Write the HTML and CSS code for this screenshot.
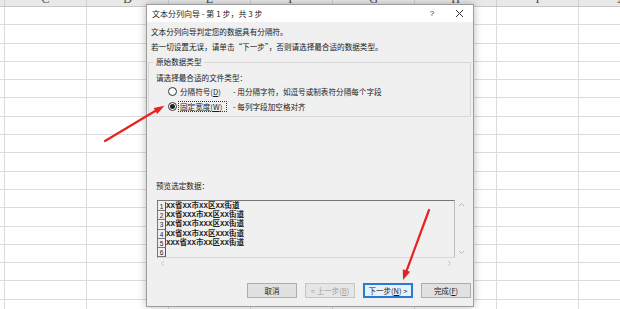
FILE: index.html
```html
<!DOCTYPE html>
<html lang="zh">
<head>
<meta charset="utf-8">
<link rel="stylesheet" href="styles.css">
</head>
<body>
<div class="sheet">
  <div class="colhead">
    <div class="hc stub"></div>
    <div class="hc"><span>C</span></div>
    <div class="hc"><span>D</span></div>
    <div class="hc"><span>E</span></div>
    <div class="hc"><span>F</span></div>
    <div class="hc"><span>G</span></div>
    <div class="hc"><span>H</span></div>
    <div class="hc"><span>I</span></div>
    <div class="hc"><span>J</span></div>
  </div>
  <div class="grid"></div>
</div>

<div class="dialog">
  <div class="titlebar">
    <span class="title">文本分列向导 - 第 1 步，共 3 步</span>
    <span class="help">?</span>
    <svg class="close" width="9" height="9" viewBox="0 0 9 9"><path d="M1 1L8 8M8 1L1 8" stroke="#333" stroke-width="1"/></svg>
  </div>
  <div class="body">
    <p class="line">文本分列向导判定您的数据具有分隔符。</p>
    <p class="line">若一切设置无误，请单击“下一步”，否则请选择最合适的数据类型。</p>
    <fieldset class="group">
      <legend>原始数据类型</legend>
      <p class="ask">请选择最合适的文件类型：</p>
      <div class="opt">
        <span class="radio"></span>
        <span class="olabel">分隔符号(<u>D</u>)</span>
        <span class="odesc">- 用分隔字符，如逗号或制表符分隔每个字段</span>
      </div>
      <div class="opt">
        <span class="radio on"></span>
        <span class="olabel focus">固定宽度(<u>W</u>)</span>
        <span class="odesc">- 每列字段加空格对齐</span>
      </div>
    </fieldset>
    <p class="plabel">预览选定数据：</p>
    <div class="preview">
      <div class="pmain">
        <div class="data">
          <div class="row"><span class="num">1</span><span class="txt">XX省XX市XX区XX街道</span></div>
          <div class="row"><span class="num">2</span><span class="txt">XX省XXX市XX区XX街道</span></div>
          <div class="row"><span class="num">3</span><span class="txt">XX省XX市XXX区XX街道</span></div>
          <div class="row"><span class="num">4</span><span class="txt">XX省XX市XX区XXX街道</span></div>
          <div class="row"><span class="num">5</span><span class="txt">XXX省XX市XX区XX街道</span></div>
          <div class="row"><span class="num">6</span><span class="txt"></span></div>
        </div>
        <div class="vscroll">
          <svg width="7" height="5" viewBox="0 0 7 5"><path d="M1 4L3.5 1.5L6 4" fill="none" stroke="#b8b8b8" stroke-width="1"/></svg>
          <svg width="7" height="5" viewBox="0 0 7 5"><path d="M1 1L3.5 3.5L6 1" fill="none" stroke="#b8b8b8" stroke-width="1"/></svg>
        </div>
      </div>
      <div class="hscroll">
        <svg width="5" height="7" viewBox="0 0 5 7"><path d="M4 1L1.5 3.5L4 6" fill="none" stroke="#c4c4c4" stroke-width="1"/></svg>
        <svg width="5" height="7" viewBox="0 0 5 7"><path d="M1 1L3.5 3.5L1 6" fill="none" stroke="#c4c4c4" stroke-width="1"/></svg>
      </div>
    </div>
    <div class="buttons">
      <button class="btn">取消</button>
      <button class="btn disabled">&lt; 上一步(<u>B</u>)</button>
      <button class="btn default">下一步(<u>N</u>) &gt;</button>
      <button class="btn">完成(<u>F</u>)</button>
    </div>
  </div>
</div>

<svg class="arrows" width="620" height="309" viewBox="0 0 620 309">
  <line x1="105" y1="141" x2="156" y2="110.5" stroke="#e8231f" stroke-width="2.2" stroke-linecap="round"/>
  <polygon points="164.5,105.8 157.2,114.1 153.6,108.1" fill="#e8231f"/>
  <line x1="429" y1="210" x2="406.5" y2="271" stroke="#e8231f" stroke-width="2.2" stroke-linecap="round"/>
  <polygon points="403,280 410.2,271.8 402.8,269.2" fill="#e8231f"/>
</svg>
</body>
</html>
```

FILE: styles.css
```css
* { box-sizing: border-box; }
html, body {
  margin: 0;
  padding: 0;
  width: 620px;
  height: 309px;
  overflow: hidden;
  background: #fff;
  font-family: "Noto Sans CJK SC", "Noto Sans", sans-serif;
}
.sheet {
  width: 620px;
  height: 309px;
  display: flex;
  flex-direction: column;
}
.colhead {
  height: 7px;
  flex: none;
  display: flex;
  background: #e9e9e9;
  border-bottom: 1px solid #c9c9c9;
  overflow: hidden;
}
.hc {
  flex: none;
  width: 82px;
  border-right: 1px solid #cfcfcf;
  display: flex;
  justify-content: center;
  font-family: "Liberation Serif", serif;
  font-size: 12px;
  line-height: 12px;
  color: #444;
}
.hc span { margin-top: -7px; }
.hc.stub { width: 5px; }
.grid {
  flex: 1;
  background-image:
    repeating-linear-gradient(to right, #dcdcdc 0 1px, transparent 1px 82px),
    repeating-linear-gradient(to bottom, transparent 0 17.3px, #dcdcdc 17.3px 18.3px);
  background-position: 4px 0, 0 0;
}

.dialog {
  position: absolute;
  left: 146px;
  top: 4px;
  width: 328px;
  height: 303px;
  border: 1px solid #9d9d9d;
  background: #f0f0f0;
  box-shadow: 0 0 8px rgba(0,0,0,0.28);
  display: flex;
  flex-direction: column;
  font-size: 7.6px;
  color: #1b1b1b;
}
.titlebar {
  height: 17px;
  flex: none;
  background: #fff;
  display: flex;
  align-items: center;
  padding-left: 5px;
  font-size: 8px;
}
.title { flex: 1; }
.help { width: 10px; margin-right: 18px; text-align: center; font-family: "Liberation Sans", sans-serif; font-size: 8px; color: #333; }
.close { margin-right: 9px; }
.body {
  flex: 1;
  display: flex;
  flex-direction: column;
}
.line {
  margin: 5px 0 0 4px;
  line-height: 10px;
  height: 10px;
  white-space: nowrap;
}
.group {
  margin: 5px 2px 0 1px;
  padding: 0 4px 4px 7px;
  border: 1px solid #d8d8d8;
  min-width: 0;
}
.group legend {
  padding: 0 2px;
  margin-left: -2px;
  line-height: 10px;
  height: 10px;
  font-size: 7.6px;
}
.ask {
  margin: 6px 0 0 0;
  line-height: 10px;
  height: 10px;
}
.opt {
  display: flex;
  align-items: center;
  height: 12px;
  margin-top: 2px;
  white-space: nowrap;
}
.opt + .opt { margin-top: 3px; }
.radio {
  width: 9px;
  height: 9px;
  border: 1px solid #333;
  border-radius: 50%;
  background: #fff;
  margin-left: 12px;
  margin-right: 1px;
  display: flex;
  align-items: center;
  justify-content: center;
}
.radio.on::after {
  content: "";
  width: 5px;
  height: 5px;
  border-radius: 50%;
  background: #222;
}
.olabel {
  width: 49px;
  height: 11px;
  line-height: 9px;
  padding: 0 1px;
  border: 1px dotted transparent;
}
.olabel.focus { border-color: #333; }
.odesc { margin-left: 6px; }
.plabel {
  margin: 64px 0 0 9px;
  line-height: 10px;
  height: 10px;
}
.preview {
  margin: 9px 0 0 10px;
  width: 311px;
  height: 69px;
  display: flex;
  flex-direction: column;
}
.pmain {
  display: flex;
  height: 58px;
}
.data {
  width: 298px;
  height: 58px;
  border-top: 1px solid #777;
  border-left: 1px solid #777;
  border-right: 1px solid #bdbdbd;
  border-bottom: 1px solid #d8d8d8;
  padding-top: 1px;
  display: flex;
  flex-direction: column;
}
.row {
  height: 9.2px;
  display: flex;
  line-height: 9.2px;
}
.num {
  width: 8px;
  flex: none;
  border-right: 1px solid #555;
  border-bottom: 1px solid #777;
  font-family: "Liberation Sans", sans-serif;
  font-size: 6.5px;
  text-align: center;
  color: #222;
}
.txt {
  font-family: "Liberation Mono", "Noto Sans CJK SC", monospace;
  font-size: 7.5px;
  font-weight: bold;
  color: #222;
  white-space: nowrap;
}
.vscroll {
  width: 13px;
  display: flex;
  flex-direction: column;
  justify-content: space-between;
  align-items: center;
  padding: 2px 0 3px;
}
.hscroll {
  height: 11px;
  width: 298px;
  display: flex;
  justify-content: space-between;
  align-items: center;
  padding: 0 3px 0 3px;
}
.buttons {
  display: flex;
  justify-content: flex-end;
  gap: 8px;
  margin: 14px 2px 0 0;
}
.btn {
  width: 50px;
  height: 15px;
  padding: 0;
  margin: 0;
  background: #e1e1e1;
  border: 1px solid #adadad;
  font-family: "Noto Sans CJK SC", sans-serif;
  font-size: 7.5px;
  line-height: 12px;
  color: #1b1b1b;
  display: flex;
  align-items: center;
  justify-content: center;
  white-space: nowrap;
}
.btn.disabled { color: #a0a0a0; background: #e6e6e6; border-color: #c6c6c6; }
.btn.default { border: 1px solid #2a7ad5; background: #e5f1fb; box-shadow: inset 0 0 0 1px #2a7ad5; }
.arrows {
  position: absolute;
  left: 0;
  top: 0;
  pointer-events: none;
}
```
